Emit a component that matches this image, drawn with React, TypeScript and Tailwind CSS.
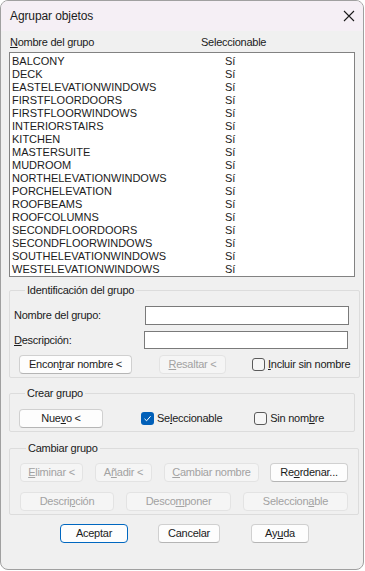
import type { ReactNode } from 'react';

const groups = [
    'BALCONY',
    'DECK',
    'EASTELEVATIONWINDOWS',
    'FIRSTFLOORDOORS',
    'FIRSTFLOORWINDOWS',
    'INTERIORSTAIRS',
    'KITCHEN',
    'MASTERSUITE',
    'MUDROOM',
    'NORTHELEVATIONWINDOWS',
    'PORCHELEVATION',
    'ROOFBEAMS',
    'ROOFCOLUMNS',
    'SECONDFLOORDOORS',
    'SECONDFLOORWINDOWS',
    'SOUTHELEVATIONWINDOWS',
    'WESTELEVATIONWINDOWS',
];

// dialog text: narrow ui font look
const ui = 'text-[11px] tracking-[-0.25px] text-[#1b1b1b]';

function Btn({ children, w, disabled, primary, className = '' }: { children: ReactNode; w: string; disabled?: boolean; primary?: boolean; className?: string }) {
    let look = 'bg-[#fdfdfd] border-[#d0d0d0] border-b-[#b5b5b5] text-[#1b1b1b]';
    if (disabled) look = 'bg-[#f5f5f5] border-[#e3e3e3] text-[#a2a2a2]';
    if (primary) look = 'bg-[#fdfdfd] border-[#0067c0] text-[#1b1b1b]';
    return (
        <div className={`h-[19px] flex items-center justify-center rounded-[4px] border text-[11px] tracking-[-0.25px] leading-none whitespace-nowrap ${look} ${w} ${className}`}>
            {children}
        </div>
    );
}

function Check({ checked }: { checked?: boolean }) {
    if (checked) {
        return (
            <div className="w-[13px] h-[13px] shrink-0 rounded-[3px] bg-[#005fb8] flex items-center justify-center">
                <svg width="9" height="9" viewBox="0 0 9 9">
                    <path d="M1.5 4.8 L3.6 6.8 L7.6 2.2" fill="none" stroke="#fff" strokeWidth="1" />
                </svg>
            </div>
        );
    }
    return <div className="w-[13px] h-[13px] shrink-0 rounded-[3px] border border-[#5a5a5a] bg-[#f6f6f6]" />;
}

function Box({ title, children, className = '' }: { title: string; children: ReactNode; className?: string }) {
    return (
        <fieldset className={`border border-[#dcdcdc] rounded-[2px] ${className}`}>
            <legend className={`ml-[6px] px-[2px] leading-[14px] ${ui}`}>{title}</legend>
            {children}
        </fieldset>
    );
}

export default function App() {
    return (
        <div className="w-[365px] h-[571px] bg-white" style={{ fontFamily: '"Liberation Sans", Arial, sans-serif' }}>
            <div className="w-[364px] h-[570px] rounded-[8px] border border-[#a0a0a0] bg-[#f0f0f0] overflow-hidden flex flex-col">
                {/* title bar */}
                <div className="h-[30px] shrink-0 bg-[#f5eff5] flex items-center justify-between pl-[9px] pr-[8px]">
                    <span className="text-[12px] tracking-[-0.1px] text-[#1b1b1b]">Agrupar objetos</span>
                    <svg width="12" height="12" viewBox="0 0 12 12">
                        <path d="M1 1 L11 11 M11 1 L1 11" stroke="#1b1b1b" strokeWidth="1.1" />
                    </svg>
                </div>

                <div className="px-[8px] flex flex-col">
                    {/* header */}
                    <div className={`mt-[4px] flex leading-[14px] ${ui}`}>
                        <span className="pl-[1px] w-[192px]"><u>N</u>ombre del grupo</span>
                        <span>Seleccionable</span>
                    </div>

                    {/* list */}
                    <div className="mt-[3px] h-[225px] border border-[#828282] bg-white pt-[2px] pl-[2px] text-[11px] text-[#1b1b1b]">
                        {groups.map((g) => (
                            <div key={g} className="h-[13px] leading-[13px] flex">
                                <span className="w-[213px]">{g}</span>
                                <span>Sí</span>
                            </div>
                        ))}
                    </div>

                    {/* identificacion */}
                    <Box title="Identificación del grupo" className="mt-[6px] px-[9px] pt-[9px] pb-[3px]">
                        <div className={`flex items-center h-[19px] ${ui}`}>
                            <span className="w-[126px] -ml-[5px]">Nombre del <u>g</u>rupo:</span>
                            <div className="ml-[5px] w-[204px] h-[19px] border border-[#7a7a7a] bg-white" />
                        </div>
                        <div className={`mt-[6px] flex items-center h-[18px] ${ui}`}>
                            <span className="w-[126px] -ml-[5px]"><u>D</u>escripción:</span>
                            <div className="ml-[4px] w-[204px] h-[18px] border border-[#7a7a7a] bg-white" />
                        </div>
                        <div className="mt-[6px] flex items-center">
                            <Btn w="w-[113px]">Encon<u>t</u>rar nombre &lt;</Btn>
                            <Btn w="w-[67px]" disabled className="ml-[27px]"><u>R</u>esaltar &lt;</Btn>
                            <div className={`ml-[26px] flex items-center gap-[3px] whitespace-nowrap ${ui}`}>
                                <Check />
                                <span><u>I</u>ncluir sin nombre</span>
                            </div>
                        </div>
                    </Box>

                    {/* crear */}
                    <Box title="Crear grupo" className="mt-[8px] px-[9px] pt-[9px] pb-[3px]">
                        <div className="flex items-center">
                            <Btn w="w-[84px]">Nue<u>v</u>o &lt;</Btn>
                            <div className={`ml-[38px] flex items-center gap-[3px] whitespace-nowrap ${ui}`}>
                                <Check checked />
                                <span>Se<u>l</u>eccionable</span>
                            </div>
                            <div className={`ml-[32px] flex items-center gap-[3px] whitespace-nowrap ${ui}`}>
                                <Check />
                                <span>Sin nom<u>b</u>re</span>
                            </div>
                        </div>
                    </Box>

                    {/* cambiar */}
                    <Box title="Cambiar grupo" className="mt-[9px] px-[10px] pt-[8px] pb-[3px]">
                        <div className="flex items-center">
                            <Btn w="w-[63px]" disabled><u>E</u>liminar &lt;</Btn>
                            <Btn w="w-[57px]" disabled className="ml-[12px]">A<u>ñ</u>adir &lt;</Btn>
                            <Btn w="w-[95px]" disabled className="ml-[12px]"><u>C</u>ambiar nombre</Btn>
                            <Btn w="w-[78px]" className="ml-[11px]">Re<u>o</u>rdenar...</Btn>
                        </div>
                        <div className="mt-[10px] flex items-center">
                            <Btn w="w-[94px]" disabled>Descri<u>p</u>ción</Btn>
                            <Btn w="w-[105px]" disabled className="ml-[12px]">Desco<u>m</u>poner</Btn>
                            <Btn w="w-[105px]" disabled className="ml-[12px]">Seleccion<u>a</u>ble</Btn>
                        </div>
                    </Box>

                    {/* bottom */}
                    <div className="mt-[9px] flex items-center">
                        <Btn w="w-[68px]" primary className="ml-[51px]">Aceptar</Btn>
                        <Btn w="w-[62px]" className="ml-[30px]">Cancelar</Btn>
                        <Btn w="w-[58px]" className="ml-[31px]">Ay<u>u</u>da</Btn>
                    </div>
                </div>
            </div>
        </div>
    );
}
